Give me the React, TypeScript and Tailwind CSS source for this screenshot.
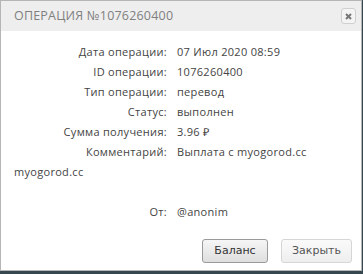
import React from "react";

const rows: [string, string][] = [
  ["Дата операции:", "07 Июл 2020 08:59"],
  ["ID операции:", "1076260400"],
  ["Тип операции:", "перевод"],
  ["Статус:", "выполнен"],
  ["Сумма получения:", "3.96 ₽"],
];

export default function App() {
  return (
    <div className="w-[363px] h-[274px] bg-[#37474f] overflow-hidden">
      <div className="w-[362px] h-[271px] bg-white border border-[#b5b5b5] flex flex-col">
        <div className="h-[30px] shrink-0 bg-[#eeeeee] flex items-center pl-[13px] pr-[5px]">
          <div
            className="flex-1 text-[12.5px] text-[#808080] tracking-[0.2px] uppercase"
            style={{ fontFamily: '"Open Sans", sans-serif' }}
          >
            ОПЕРАЦИЯ №1076260400
          </div>
          <div className="w-[15px] h-[16px] border border-[#d0d0d0] rounded-[3px] bg-[#f4f4f4] flex items-center justify-center">
            <svg width="7" height="7" viewBox="0 0 7 7">
              <path d="M1 1L6 6M6 1L1 6" stroke="#777" strokeWidth="2" />
            </svg>
          </div>
        </div>
        <div
          className="flex-1 pt-[11px] pl-[13px] pr-[9px] text-[11px] text-[#444] tracking-[0.3px]"
          style={{ fontFamily: '"Open Sans", sans-serif' }}
        >
          {rows.map(([l, v]) => (
            <div key={l} className="h-5 leading-5 flex">
              <span className="w-[153px] shrink-0 text-right">{l}</span>
              <span className="ml-[10px]">{v}</span>
            </div>
          ))}
          <div className="h-5 leading-5 flex">
            <span className="w-[153px] shrink-0 text-right">Комментарий:</span>
            <span className="ml-[10px]">Выплата с myogorod.cc</span>
          </div>
          <div className="h-5 leading-5">myogorod.cc</div>
          <div className="h-5" />
          <div className="h-5 leading-5 flex">
            <span className="w-[153px] shrink-0 text-right">От:</span>
            <span className="ml-[10px]">@anonim</span>
          </div>
          <div
            className="flex justify-end gap-[13px] mt-[17px] text-[11px] tracking-normal"
            style={{ fontFamily: '"DejaVu Sans", sans-serif' }}
          >
            <button className="w-[66px] h-[24px] rounded-[3px] border border-[#9a9a9a] bg-gradient-to-b from-[#f6f6f6] to-[#dedede] text-[#333]">
              Баланс
            </button>
            <button className="w-[71px] h-[24px] rounded-[3px] border border-[#d6d6d6] bg-gradient-to-b from-[#fafafa] to-[#eeeeee] text-[#555]">
              Закрыть
            </button>
          </div>
        </div>
      </div>
    </div>
  );
}
